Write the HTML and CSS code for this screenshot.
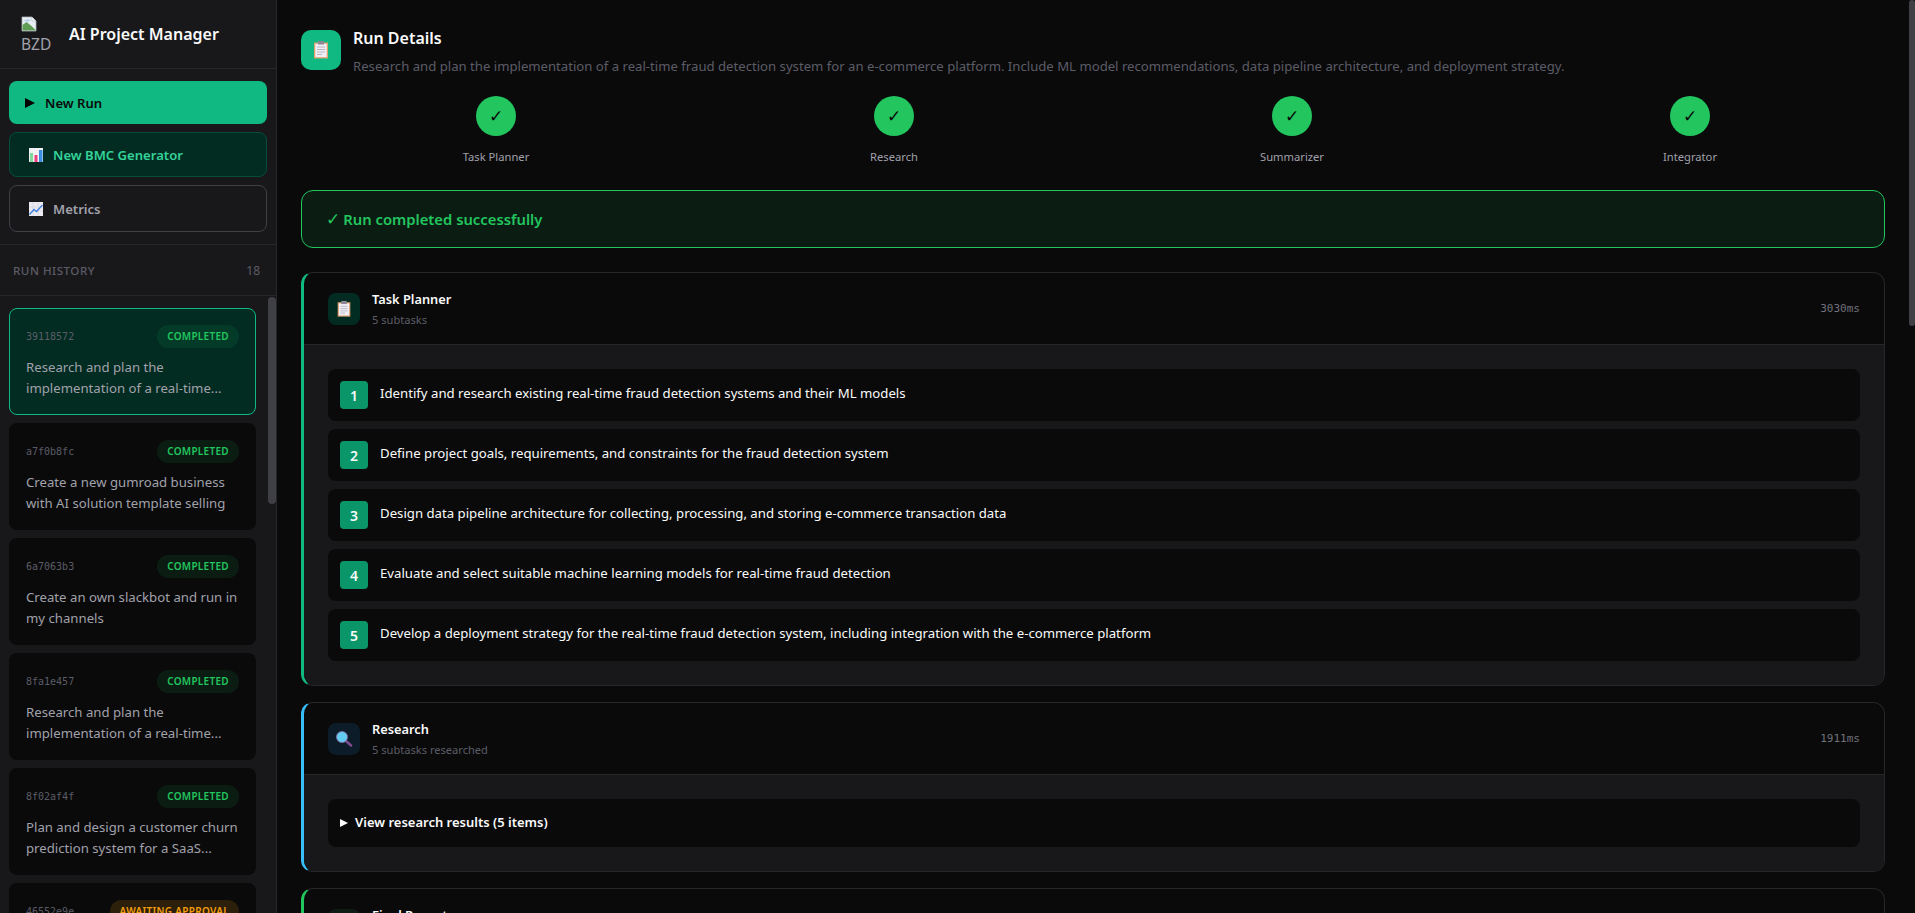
FILE: index.html
```html
<!DOCTYPE html>
<html lang="en">
<head>
      <meta charset="UTF-8">
      <meta name="viewport" content="width=device-width, initial-scale=1.0">
      <title>AI Project Manager</title>
      <link rel="stylesheet" href="styles.css">
</head>
<body>
      <div class="app">
            <aside class="sidebar">
                  <div class="brand">
                        <div class="brand-logo">
                              <svg class="broken-img" width="16" height="16" viewBox="0 0 16 16">
                                    <path d="M1 1h10l4 4v10H1z" fill="#e8eef2" stroke="#a9b4ba" stroke-width=".8"/>
                                    <path d="M1.500 14.500V9l4-3 5 4 4.500 4.500z" fill="#5f9e54"/>
                                    <path d="M2 5c2-2 6-2 8-1l-3 2z" fill="#b9d3ea"/>
                                    <path d="M11 1v4h4z" fill="#fff" stroke="#a9b4ba" stroke-width=".6"/>
                              </svg>
                              <span>BZD</span>
                        </div>
                        <h1>AI Project Manager</h1>
                  </div>
                  <div class="side-actions">
                        <button class="btn btn-run"><span class="play"></span>New Run</button>
                        <button class="btn btn-bmc">
                              <svg width="16" height="16" viewBox="0 0 16 16">
                                    <rect x="1" y="1" width="14" height="14" fill="#f1f1f4"/>
                                    <rect x="2" y="6" width="3" height="9" fill="#7ed99a"/>
                                    <rect x="6.500" y="8" width="3" height="7" fill="#ef3f80"/>
                                    <rect x="11" y="3" width="3.500" height="12" fill="#3a8fe0"/>
                              </svg>
                              New BMC Generator
                        </button>
                        <button class="btn btn-metrics">
                              <svg width="16" height="16" viewBox="0 0 16 16">
                                    <rect x="1" y="1" width="14" height="14" fill="#ecebf2"/>
                                    <path d="M1 6h14M1 10h14M5 1v14M10 1v14" stroke="#d3d1de" stroke-width=".6"/>
                                    <path d="M1.500 13.500 6 8.500l2.500 2L14.500 4" fill="none" stroke="#3f7fe0" stroke-width="1.300"/>
                              </svg>
                              Metrics
                        </button>
                  </div>
                  <div class="history-head">
                        <span class="history-title">RUN HISTORY</span>
                        <span class="history-count">18</span>
                  </div>
                  <div class="history-list">
                        <div class="run-list">
                              <div class="run-card active">
                                    <div class="run-top"><code>39118572</code><span class="badge">COMPLETED</span></div>
                                    <p>Research and plan the implementation of a real-time...</p>
                              </div>
                              <div class="run-card">
                                    <div class="run-top"><code>a7f0b8fc</code><span class="badge">COMPLETED</span></div>
                                    <p>Create a new gumroad business with AI solution template selling</p>
                              </div>
                              <div class="run-card">
                                    <div class="run-top"><code>6a7063b3</code><span class="badge">COMPLETED</span></div>
                                    <p>Create an own slackbot and run in my channels</p>
                              </div>
                              <div class="run-card">
                                    <div class="run-top"><code>8fa1e457</code><span class="badge">COMPLETED</span></div>
                                    <p>Research and plan the implementation of a real-time...</p>
                              </div>
                              <div class="run-card">
                                    <div class="run-top"><code>8f02af4f</code><span class="badge">COMPLETED</span></div>
                                    <p>Plan and design a customer churn prediction system for a SaaS...</p>
                              </div>
                              <div class="run-card">
                                    <div class="run-top"><code>46552e9e</code><span class="badge badge-wait">AWAITING APPROVAL</span></div>
                              </div>
                        </div>
                        <div class="side-scroll"></div>
                  </div>
            </aside>

            <main class="main">
                  <div class="main-scroll"></div>
                  <header class="run-head">
                        <div class="run-icon">
                              <svg width="20" height="20" viewBox="0 0 20 20"><use href="#clipboard"/></svg>
                        </div>
                        <div>
                              <h2>Run Details</h2>
                              <p>Research and plan the implementation of a real-time fraud detection system for an e-commerce platform. Include ML model recommendations, data pipeline architecture, and deployment strategy.</p>
                        </div>
                  </header>

                  <div class="stepper">
                        <div class="step"><span class="step-dot">✓</span><span>Task Planner</span></div>
                        <div class="step"><span class="step-dot">✓</span><span>Research</span></div>
                        <div class="step"><span class="step-dot">✓</span><span>Summarizer</span></div>
                        <div class="step"><span class="step-dot">✓</span><span>Integrator</span></div>
                  </div>

                  <div class="success"><span class="success-check">✓</span>Run completed successfully</div>

                  <section class="agent agent-green">
                        <div class="agent-head">
                              <div class="agent-icon icon-green">
                                    <svg width="18" height="18" viewBox="0 0 20 20"><use href="#clipboard"/></svg>
                              </div>
                              <div class="agent-name">
                                    <h3>Task Planner</h3>
                                    <span>5 subtasks</span>
                              </div>
                              <code>3030ms</code>
                        </div>
                        <div class="agent-body">
                              <div class="task"><span class="task-num">1</span><span class="task-text">Identify and research existing real-time fraud detection systems and their ML models</span></div>
                              <div class="task"><span class="task-num">2</span><span class="task-text">Define project goals, requirements, and constraints for the fraud detection system</span></div>
                              <div class="task"><span class="task-num">3</span><span class="task-text">Design data pipeline architecture for collecting, processing, and storing e-commerce transaction data</span></div>
                              <div class="task"><span class="task-num">4</span><span class="task-text">Evaluate and select suitable machine learning models for real-time fraud detection</span></div>
                              <div class="task"><span class="task-num">5</span><span class="task-text">Develop a deployment strategy for the real-time fraud detection system, including integration with the e-commerce platform</span></div>
                        </div>
                  </section>

                  <section class="agent agent-blue">
                        <div class="agent-head">
                              <div class="agent-icon icon-blue">
                                    <svg width="18" height="18" viewBox="0 0 18 18">
                                          <path d="M10.500 10.500 16 15.500" stroke="#7a4a8c" stroke-width="2.600" stroke-linecap="round"/>
                                          <circle cx="7" cy="7" r="5.500" fill="#62cdf0" stroke="#8a6ca8" stroke-width=".8"/>
                                    </svg>
                              </div>
                              <div class="agent-name">
                                    <h3>Research</h3>
                                    <span>5 subtasks researched</span>
                              </div>
                              <code>1911ms</code>
                        </div>
                        <div class="agent-body">
                              <div class="task task-more"><span class="caret"></span><span class="task-text">View research results (5 items)</span></div>
                        </div>
                  </section>

                  <section class="agent agent-final">
                        <div class="agent-head">
                              <div class="agent-icon icon-final"></div>
                              <div class="agent-name">
                                    <h3>Final Report</h3>
                                    <span>&nbsp;</span>
                              </div>
                        </div>
                  </section>
            </main>
      </div>

      <svg class="defs" width="0" height="0">
            <symbol id="clipboard" viewBox="0 0 20 20">
                  <rect x="3" y="2.500" width="14" height="16" fill="#e0a070"/>
                  <rect x="4.300" y="3.800" width="11.400" height="13.400" fill="#f1eff6"/>
                  <rect x="7" y="1" width="6" height="3.500" fill="#8b8794"/>
                  <path d="M6 7h8M6 9.500h8M6 12h8M6 14.500h5" stroke="#b9b6c6" stroke-width="1"/>
            </symbol>
      </svg>
</body>
</html>
```

FILE: styles.css
```css
:root {
	--bg: #0a0a0b;
	--panel: #18181b;
	--line: #27272a;
	--text: #fafafa;
	--muted: #a1a1aa;
	--dim: #5c5c66;
	--emerald: #10b981;
	--green: #22c55e;
	--blue: #38bdf8;
	--ui-font: "Noto Sans", "Open Sans", sans-serif;
	--mono-font: "DejaVu Sans Mono", "Liberation Mono", monospace;
}
* {
	box-sizing: border-box;
}
html, body {
	height: 100%;
}
body {
	margin: 0;
	overflow: hidden;
	background: var(--bg);
	color: var(--text);
	font-family: var(--ui-font);
}
h1, h2, h3, p {
	margin: 0;
}
.defs {
	position: absolute;
}
.app {
	display: flex;
	height: 100vh;
}

/* sidebar */
.sidebar {
	display: flex;
	flex-direction: column;
	flex: 0 0 277px;
	background: var(--panel);
	border-right: 1px solid var(--line);
	overflow: hidden;
}
.brand {
	display: flex;
	align-items: center;
	gap: 18px;
	height: 69px;
	padding: 0 21px;
	border-bottom: 1px solid var(--line);
}
.brand-logo {
	display: flex;
	flex-direction: column;
	gap: 4px;
	width: 30px;
	font-size: 15.500px;
	line-height: 16px;
	color: var(--muted);
}
.brand h1 {
	font-size: 16px;
	font-weight: 600;
	white-space: nowrap;
}
.side-actions {
	display: flex;
	flex-direction: column;
	gap: 8px;
	padding: 12px 9px;
	height: 176px;
	border-bottom: 1px solid var(--line);
}
.btn {
	display: flex;
	align-items: center;
	width: 100%;
	font: 600 13.100px var(--ui-font);
	border-radius: 8px;
	text-align: left;
}
.btn-run {
	gap: 10px;
	height: 43px;
	padding: 0 16px;
	background: var(--emerald);
	border: 0;
	color: #0a0a0b;
}
.play {
	width: 0;
	height: 0;
	border-left: 10px solid #000;
	border-top: 5.500px solid transparent;
	border-bottom: 5.500px solid transparent;
}
.btn-bmc {
	gap: 9px;
	height: 45px;
	padding: 0 18px;
	background: #022c22;
	border: 1px solid #064e3b;
	color: #34d399;
}
.btn-metrics {
	gap: 9px;
	height: 47px;
	padding: 0 18px;
	background: transparent;
	border: 1px solid #3f3f46;
	color: var(--muted);
}
.history-head {
	display: flex;
	justify-content: space-between;
	align-items: center;
	height: 51px;
	padding: 0 16px 0 13px;
	border-bottom: 1px solid var(--line);
	font-size: 12px;
	color: var(--dim);
}
.history-title {
	font-size: 11.600px;
	font-weight: 500;
	letter-spacing: .5px;
}
.history-list {
	position: relative;
	flex: 1;
	overflow: hidden;
	padding: 12px 20px 0 9px;
}
.run-list {
	display: flex;
	flex-direction: column;
	gap: 8px;
}
.run-card {
	height: 107px;
	flex: none;
	padding: 16px 16px 0;
	background: var(--bg);
	border: 1px solid transparent;
	border-radius: 8px;
}
.run-card.active {
	background: #022c22;
	border-color: var(--emerald);
}
.run-top {
	display: flex;
	justify-content: space-between;
	align-items: center;
	margin-bottom: 9px;
}
.run-top code {
	font: 10px var(--mono-font);
	color: var(--dim);
}
.badge {
	padding: 0 10px;
	height: 23px;
	line-height: 23px;
	border-radius: 12px;
	background: rgba(34, 197, 94, .1);
	color: var(--green);
	font-size: 10px;
	font-weight: 600;
	letter-spacing: .3px;
}
.badge-wait {
	background: rgba(245, 158, 11, .15);
	color: #f59e0b;
}
.run-card p {
	font-size: 13.200px;
	line-height: 21px;
	color: var(--muted);
}
.side-scroll {
	position: absolute;
	top: 1px;
	right: 0;
	width: 8px;
	height: 207px;
	border-radius: 4px;
	background: #3f3f46;
}

/* main column */
.main {
	position: relative;
	flex: 1;
	min-width: 0;
	overflow: hidden;
	padding: 30px 30px 0 24px;
}
.main-scroll {
	position: absolute;
	top: 0;
	right: 0;
	width: 6px;
	height: 326px;
	border-radius: 3px;
	background: #3f3f46;
}
.run-head {
	display: flex;
	gap: 12px;
}
.run-icon {
	display: grid;
	place-items: center;
	flex: none;
	width: 40px;
	height: 40px;
	background: var(--emerald);
	border-radius: 10px;
}
.run-head h2 {
	font-size: 16px;
	font-weight: 600;
	line-height: 24px;
	margin-top: -4px;
}
.run-head p {
	font-size: 13.150px;
	line-height: 20px;
	margin-top: 6px;
	color: var(--dim);
	white-space: nowrap;
}
.stepper {
	display: grid;
	grid-template-columns: repeat(4, 1fr);
	gap: 8px;
	margin-top: 20px;
}
.step {
	display: flex;
	flex-direction: column;
	align-items: center;
	gap: 13px;
	font-size: 11.200px;
	line-height: 16px;
	color: var(--muted);
}
.step-dot {
	display: grid;
	place-items: center;
	width: 40px;
	height: 40px;
	border-radius: 50%;
	background: var(--green);
	color: #0a0a0b;
	font-family: "DejaVu Sans", sans-serif;
	font-size: 17px;
}
.success {
	display: flex;
	align-items: center;
	gap: 3px;
	height: 58px;
	margin-top: 25px;
	padding: 0 24px;
	border: 1px solid var(--green);
	border-radius: 12px;
	background: rgba(34, 197, 94, .1);
	color: var(--green);
	font-size: 14.800px;
	font-weight: 600;
}
.success-check {
	font-family: "DejaVu Sans", sans-serif;
	font-size: 17px;
	font-weight: 700;
	line-height: 1;
}
.agent {
	margin-top: 24px;
	border: 1px solid var(--line);
	border-left-width: 3px;
	border-radius: 12px;
	overflow: hidden;
}
.agent + .agent {
	margin-top: 16px;
}
.agent-green {
	border-left-color: var(--emerald);
}
.agent-blue {
	border-left-color: var(--blue);
}
.agent-final {
	border-left-color: var(--green);
}
.agent-head {
	display: flex;
	align-items: center;
	gap: 12px;
	height: 72px;
	padding: 0 24px;
	border-bottom: 1px solid var(--line);
}
.agent-icon {
	display: grid;
	place-items: center;
	flex: none;
	width: 32px;
	height: 32px;
	border-radius: 8px;
}
.icon-green {
	background: #022c22;
}
.icon-blue {
	background: #0c1c28;
}
.icon-final {
	background: #0e1c13;
}
.agent-name {
	flex: 1;
}
.agent-name h3 {
	font-size: 12.800px;
	font-weight: 600;
	line-height: 20px;
}
.agent-name span {
	display: block;
	font-size: 11.100px;
	line-height: 16px;
	margin-top: 3px;
	color: var(--dim);
}
.agent-head code {
	font: 11px var(--mono-font);
	color: #71717a;
}
.agent-body {
	display: flex;
	flex-direction: column;
	gap: 8px;
	padding: 24px;
	background: var(--panel);
}
.task {
	display: flex;
	align-items: center;
	gap: 12px;
	height: 52px;
	padding: 0 12px;
	background: var(--bg);
	border-radius: 8px;
	font-size: 13.200px;
}
.task-text {
	margin-bottom: 4px;
}
.task-num {
	display: grid;
	place-items: center;
	flex: none;
	width: 28px;
	height: 28px;
	border-radius: 4px;
	background: #0a9669;
	font-weight: 600;
	font-size: 14px;
}
.task-more {
	height: 48px;
	gap: 7px;
	font-size: 13px;
	font-weight: 600;
}
.task-more .task-text {
	margin-bottom: 2px;
}
.caret {
	width: 0;
	height: 0;
	border-left: 8px solid var(--text);
	border-top: 4.500px solid transparent;
	border-bottom: 4.500px solid transparent;
}
```
